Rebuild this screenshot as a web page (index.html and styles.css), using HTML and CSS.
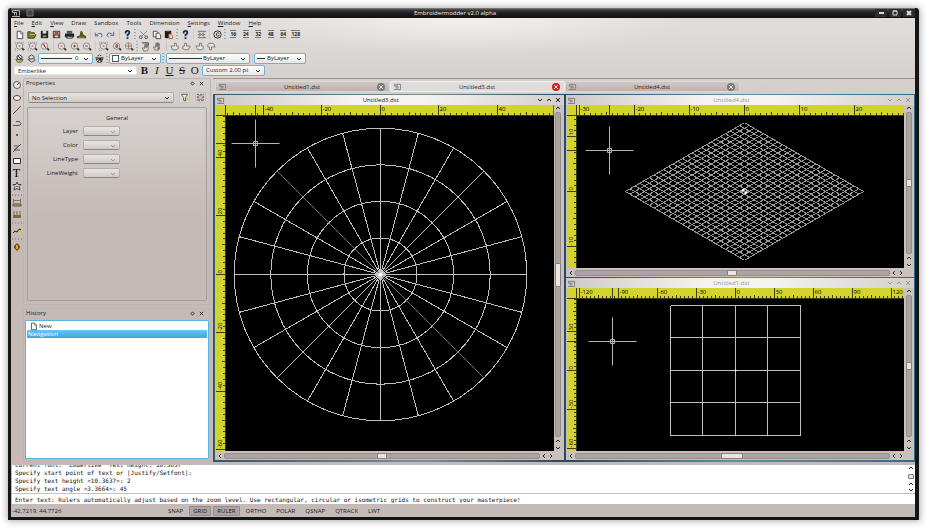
FILE: index.html
```html
<!DOCTYPE html>
<html lang="en">
<head>
<meta charset="utf-8">
<title>Embroidermodder v2.0 alpha</title>
<link rel="stylesheet" href="styles.css">
</head>
<body>
<svg class="sprite" aria-hidden="true">
  <symbol id="machine" viewBox="0 0 10 8"><path d="M1 7.500h8M1.500 1.500h7v5M1.500 1.500v2h4v3M3.500 3.500v3" fill="none" stroke="currentColor"/></symbol>
  <symbol id="down" viewBox="0 0 6 6"><path d="M1 2l2 2 2-2" fill="none" stroke="currentColor"/></symbol>
  <symbol id="up" viewBox="0 0 6 6"><path d="M1 4l2-2 2 2" fill="none" stroke="currentColor"/></symbol>
  <symbol id="left" viewBox="0 0 6 6"><path d="M4 1L2 3l2 2" fill="none" stroke="currentColor"/></symbol>
  <symbol id="right" viewBox="0 0 6 6"><path d="M2 1l2 2-2 2" fill="none" stroke="currentColor"/></symbol>
  <symbol id="x" viewBox="0 0 6 6"><path d="M1 1l4 4M5 1L1 5" fill="none" stroke="currentColor"/></symbol>
  <symbol id="float" viewBox="0 0 6 6"><path d="M3 1l2 2-2 2-2-2z" fill="none" stroke="currentColor"/></symbol>
  <symbol id="new" viewBox="0 0 12 12"><path d="M3.500 2.500h4l2 2v6h-6z" fill="#fff" stroke="#444"/><path d="M7 3v2h2" fill="none" stroke="#777"/></symbol>
  <symbol id="open" viewBox="0 0 12 12"><path d="M2 10V3h3l1 1h3v2h2l-2 4z" fill="#76762c" stroke="#45451a"/><path d="M4 6h6" stroke="#c0c070"/></symbol>
  <symbol id="save" viewBox="0 0 12 12"><path d="M2 2h8v8H2z" fill="#222"/><path d="M4 2h4v3H4z" fill="#ddd"/><path d="M4 7h4v2H4z" fill="#999944"/></symbol>
  <symbol id="saveas" viewBox="0 0 12 12"><path d="M2 2h8v8H2z" fill="#444"/><path d="M3 3h6v3H3z" fill="#c98"/><path d="M4 3l4 3M8 3L4 6" stroke="#a22"/><path d="M4 7h4v2H4z" fill="#ccc"/></symbol>
  <symbol id="print" viewBox="0 0 12 12"><path d="M3 2h6v3H3z" fill="#555"/><path d="M1 5h10v4H1z" fill="#222"/><path d="M3 8h6v2H3z" fill="#ddd" stroke="#333"/></symbol>
  <symbol id="stitch" viewBox="0 0 12 12"><path d="M1 10V8l3-1 1-5 2 1 1 3 3 2v2z" fill="#55551d"/><path d="M3 9h6" stroke="#8e8e40"/></symbol>
  <symbol id="undo" viewBox="0 0 12 12"><path d="M9 9l1-2q0-3-4-2L3 7M2.500 4v3.500H6" fill="none" stroke="#4c5a80"/></symbol>
  <symbol id="redo" viewBox="0 0 12 12"><path d="M4 9Q1 7 3 5t5 1M9.500 3v4H6" fill="none" stroke="#4c5a80"/></symbol>
  <symbol id="help" viewBox="0 0 12 12"><path d="M4 5V4q0-2 2-2t2 2q0 1-2 2.500V8M6 9v2" fill="none" stroke="#16305e" stroke-width="2"/></symbol>
  <symbol id="cut" viewBox="0 0 12 12"><path d="M2 2l6 6M10 2L4 8" fill="none" stroke="#888"/><circle cx="3" cy="9" r="1.500" fill="none" stroke="#456"/><circle cx="9" cy="9" r="1.500" fill="none" stroke="#456"/></symbol>
  <symbol id="copy" viewBox="0 0 12 12"><path d="M2.500 2.500h4l1 1v5h-5z" fill="#fff" stroke="#444"/><path d="M5.500 4.500h3l2 2v4h-5z" fill="#eee" stroke="#444"/></symbol>
  <symbol id="paste" viewBox="0 0 12 12"><path d="M2 2h7v8H2z" fill="#241b18"/><path d="M4 2h3" stroke="#aaa"/><path d="M6.500 5.500h2l2 2v3h-4z" fill="#e8d7c9" stroke="#b3623a"/></symbol>
  <symbol id="pattern" viewBox="0 0 12 12"><path d="M2 2.500h9M2 9.500h9M3 4l6 4M9 4L3 8M2 6h2M8 6h2" fill="none" stroke="#666"/></symbol>
  <symbol id="about" viewBox="0 0 12 12"><circle cx="6" cy="6" r="4" fill="none" stroke="#222"/><path d="M8 5Q6 3 5 5v2q1 2 3 0" fill="none" stroke="#222"/></symbol>
  <symbol id="lens" viewBox="0 0 12 12"><circle cx="6" cy="5.500" r="3.500" fill="#e6e1df" stroke="#8a8381"/><path d="M9 8l2 2" stroke="#333" stroke-width="2"/></symbol>
  <symbol id="z-dot" viewBox="0 0 12 12"><use href="#lens"/><path d="M5 5h2v1H5z" fill="#b22"/></symbol>
  <symbol id="z-plus" viewBox="0 0 12 12"><use href="#lens"/><path d="M4.500 5.500h3M6 4v3" stroke="#a22"/></symbol>
  <symbol id="z-minus" viewBox="0 0 12 12"><use href="#lens"/><path d="M4.500 5.500h3" stroke="#a22"/></symbol>
  <symbol id="z-win" viewBox="0 0 12 12"><path d="M1.500 4V1.500H4M8 1.500h2.500V4M1.500 8v2.500H4" fill="none" stroke="#888" stroke-dasharray="1 1"/><use href="#lens"/><path d="M5 5h2v1H5z" fill="#b22"/></symbol>
  <symbol id="z-prev" viewBox="0 0 12 12"><use href="#lens"/><path d="M4 3l4 5M6 4v2" stroke="#a22"/></symbol>
  <symbol id="z-all" viewBox="0 0 12 12"><use href="#lens"/><path d="M5.500 4v3H7V4z" fill="none" stroke="#a22"/></symbol>
  <symbol id="z-ext" viewBox="0 0 12 12"><use href="#lens"/><path d="M3 5.500h6M6 2.500v6" stroke="#a66"/></symbol>
  <symbol id="hand" viewBox="0 0 12 12"><path d="M3 10L1.500 6.500h1L4 7V3h1v3-4h1v4-4h1v4-3h1v5l-1 2z" fill="#ddd8d5" stroke="#777"/></symbol>
  <symbol id="pan" viewBox="0 0 12 12"><path d="M2 2h7v3" fill="none" stroke="#333"/><use href="#hand" x="1" y="1"/></symbol>
  <symbol id="panpt" viewBox="0 0 12 12"><use href="#hand"/><path d="M6 7h2v2H6z" fill="#a33"/></symbol>
  <symbol id="point" viewBox="0 0 12 12"><path d="M2 5.500h4v-3h2v3h2v3l-2 1H4z" fill="#e8e3e1" stroke="#777"/></symbol>
  <symbol id="bulb" viewBox="0 0 12 12"><path d="M3 4l3-2 3 2-1 3H4z" fill="#ddd" stroke="#333"/><path d="M2 7h8l-2 3H4z" fill="#c5c52f" stroke="#555"/><path d="M4 3l4 4" stroke="#222"/></symbol>
  <symbol id="layer" viewBox="0 0 12 12"><path d="M3 4l3-2 3 2-1 3H4z" fill="#ddd" stroke="#444"/><path d="M2 7l7-1 1 2-4 2z" fill="#ccc" stroke="#555"/></symbol>
  <symbol id="wheel" viewBox="0 0 12 12"><path d="M2 5l4-3 4 3-2 5H4z" fill="#777" stroke="#333"/><path d="M2 4h8M6 2v8M3 9l6-6" stroke="#ddd"/><path d="M5 5h3v3H5z" fill="#222"/></symbol>
  <symbol id="circle" viewBox="0 0 12 12"><circle cx="6" cy="6" r="3.500" fill="#eee" stroke="#555"/><path d="M6 6l2-2" stroke="#b22"/></symbol>
  <symbol id="ellipse" viewBox="0 0 12 12"><ellipse cx="6" cy="6" rx="3.500" ry="2.500" fill="#eee" stroke="#555"/><path d="M2 6h1M9 6h1M6 3v1M6 8v1" stroke="#c11"/></symbol>
  <symbol id="line" viewBox="0 0 12 12"><path d="M2 10l8-8" stroke="#444"/><path d="M2 9h1v1H2zM9 2h1v1H9z" fill="#b33"/></symbol>
  <symbol id="arc" viewBox="0 0 12 12"><path d="M2 8.500h5q3 0 3-2L8 4.500H5" fill="none" stroke="#555"/><path d="M3 8h1v1H3zM8 4h1v1H8z" fill="#b33"/></symbol>
  <symbol id="dot" viewBox="0 0 12 12"><path d="M5 5h2v2H5z" fill="#b43b3b"/></symbol>
  <symbol id="poly" viewBox="0 0 12 12"><path d="M3 4h5L3 8h6M2 10l8-8" fill="none" stroke="#555"/><path d="M3 8h1v1H3z" fill="#b33"/></symbol>
  <symbol id="rect" viewBox="0 0 12 12"><path d="M2.500 3.500h7v5h-7z" fill="#fff" stroke="#333"/><path d="M2 3h1v1H2zM9 8h1v1H9z" fill="#b33"/></symbol>
  <symbol id="star" viewBox="0 0 12 12"><path d="M6 2l1 2.500h3L8 6.500l1 3.500-3-1.500L3 10l1-3.500-2-2h3z" fill="#ddd" stroke="#444"/><path d="M5 6h2v1H5z" fill="#b33"/></symbol>
  <symbol id="dim" viewBox="0 0 12 12"><path d="M2 3.500h8M2.500 2v4M9.500 2v4" fill="none" stroke="#777"/><path d="M2 7h8v2H2z" fill="#b5b52f" stroke="#555"/></symbol>
  <symbol id="dim2" viewBox="0 0 12 12"><path d="M2 3h8M2 5h8" stroke="#a55" stroke-dasharray="2 1"/><path d="M2 6h8v3H2z" fill="#75752d"/></symbol>
  <symbol id="path" viewBox="0 0 12 12"><path d="M2 8l2-2 2 1 2-3 2 1" fill="none" stroke="#222"/><path d="M8 7h2v3H8z" fill="#d8d830"/></symbol>
  <symbol id="bead" viewBox="0 0 12 12"><path d="M6 2l3 3v2L6 10 3 7V5z" fill="#7c4a12"/><path d="M5 4h2v4H5z" fill="#e3a52c"/></symbol>
  <symbol id="filter" viewBox="0 0 12 12"><path d="M2.500 2.500h7L7 6v4L5 9V6z" fill="#eee" stroke="#555"/><path d="M8 6h2v3H8z" fill="#c5c52d"/></symbol>
  <symbol id="select" viewBox="0 0 12 12"><path d="M2.500 2.500h7v7h-7z" fill="none" stroke="#555" stroke-dasharray="2 1"/><path d="M4 4h4v4H4z" fill="#ccc" stroke="#a77"/></symbol>
</svg>

<div class="window">
  <header class="titlebar">
    <span class="title-left"><svg><use href="#machine"/></svg><svg viewBox="0 0 10 8"><path d="M2 1h6v6H2z" fill="#444" stroke="#777"/></svg></span>
    <span>Embroidermodder v2.0 alpha</span>
    <span class="title-right">
      <button aria-label="Minimize"><svg viewBox="0 0 8 8"><path d="M2 3h5v2H2z" fill="#ddd"/></svg></button>
      <button aria-label="Maximize"><svg viewBox="0 0 8 8"><path d="M2 2h4v4H2zM2 2h4" fill="none" stroke="#ddd"/></svg></button>
      <button aria-label="Close"><svg viewBox="0 0 8 8"><path d="M2 2l4 4M6 2L2 6" stroke="#ddd" stroke-width="2"/></svg></button>
    </span>
  </header>

  <nav class="menu">
    <button><u>F</u>ile</button><button><u>E</u>dit</button><button><u>V</u>iew</button><button>Draw</button><button>Sandbox</button><button>Tools</button><button>Dimension</button><button><u>S</u>ettings</button><button><u>W</u>indow</button><button><u>H</u>elp</button>
  </nav>

  <div class="toolbar">
    <div class="group g6"><button aria-label="New"><svg><use href="#new"/></svg></button><button aria-label="Open"><svg><use href="#open"/></svg></button><button aria-label="Save"><svg><use href="#save"/></svg></button><button aria-label="Save as"><svg><use href="#saveas"/></svg></button><button aria-label="Print"><svg><use href="#print"/></svg></button><button aria-label="Export"><svg><use href="#stitch"/></svg></button></div>
    <i class="sep"></i>
    <div class="group g2"><button aria-label="Undo"><svg><use href="#undo"/></svg></button><button aria-label="Redo"><svg><use href="#redo"/></svg></button></div>
    <i class="sep"></i>
    <div class="group"><button aria-label="Help"><svg><use href="#help"/></svg></button></div>
    <i class="grip"></i>
    <div class="group g3"><button aria-label="Cut"><svg><use href="#cut"/></svg></button><button aria-label="Copy"><svg><use href="#copy"/></svg></button><button aria-label="Paste"><svg><use href="#paste"/></svg></button></div>
    <i class="grip"></i>
    <div class="group"><button aria-label="What's this"><svg><use href="#help"/></svg></button></div>
    <i class="sep"></i>
    <div class="group"><button aria-label="Details"><svg><use href="#pattern"/></svg></button></div>
    <i class="sep"></i>
    <div class="group"><button aria-label="About"><svg><use href="#about"/></svg></button></div>
    <i class="grip"></i>
    <div class="group g6 sizes"><button><span>16</span></button><button><span>24</span></button><button><span>32</span></button><button><span>48</span></button><button><span>64</span></button><button><span>128</span></button></div>
  </div>

  <div class="toolbar">
    <div class="group g3"><button aria-label="Zoom realtime"><svg><use href="#z-win"/></svg></button><button aria-label="Zoom window"><svg><use href="#z-win"/></svg></button><button aria-label="Zoom previous"><svg><use href="#z-prev"/></svg></button></div>
    <i class="sep"></i>
    <div class="group g3"><button aria-label="Zoom dynamic"><svg><use href="#z-dot"/></svg></button><button aria-label="Zoom in"><svg><use href="#z-plus"/></svg></button><button aria-label="Zoom out"><svg><use href="#z-minus"/></svg></button></div>
    <i class="sep"></i>
    <div class="group g3"><button aria-label="Zoom selected"><svg><use href="#z-win"/></svg></button><button aria-label="Zoom all"><svg><use href="#z-all"/></svg></button><button aria-label="Zoom extents"><svg><use href="#z-ext"/></svg></button></div>
    <i class="grip"></i>
    <div class="group g2"><button aria-label="Pan realtime"><svg><use href="#pan"/></svg></button><button aria-label="Pan point"><svg><use href="#panpt"/></svg></button></div>
    <i class="sep"></i>
    <div class="group g4"><button aria-label="Pan left"><svg><use href="#point"/></svg></button><button aria-label="Pan right"><svg class="flip"><use href="#point"/></svg></button><button aria-label="Pan up"><svg><use href="#point"/></svg></button><button aria-label="Pan down"><svg class="turn"><use href="#point"/></svg></button></div>
  </div>

  <div class="toolbar">
    <div class="group g2"><button aria-label="Make layer current"><svg><use href="#bulb"/></svg></button><button aria-label="Layers"><svg><use href="#layer"/></svg></button></div>
    <span class="combo blue c-layer"><i class="stroke"></i><select aria-label="Layer"><option>0</option></select><svg><use href="#down"/></svg></span>
    <div class="group"><button aria-label="Layer previous"><svg><use href="#wheel"/></svg></button></div>
    <i class="grip"></i>
    <span class="combo blue c-color"><i class="swatch"></i><select aria-label="Color"><option>ByLayer</option></select><svg><use href="#down"/></svg></span>
    <i class="grip"></i>
    <span class="combo blue c-type"><i class="stroke"></i><select aria-label="Line type"><option>ByLayer</option></select><svg><use href="#down"/></svg></span>
    <i class="sep"></i>
    <span class="combo blue c-weight"><i class="stroke"></i><select aria-label="Line weight"><option>ByLayer</option></select><svg><use href="#down"/></svg></span>
  </div>

  <div class="toolbar">
    <span class="combo c-font"><select aria-label="Font"><option>Emberlike</option></select><svg><use href="#down"/></svg></span>
    <div class="group g5 styles"><button><b>B</b></button><button><em>I</em></button><button><u>U</u></button><button><s>S</s></button><button><span class="over">O</span></button></div>
    <span class="combo blue c-size"><select aria-label="Text size"><option>Custom 2.00 pt</option></select><svg><use href="#down"/></svg></span>
  </div>

  <main class="work">
    <div class="tools">
      <div class="stack"><button aria-label="Circle"><svg><use href="#circle"/></svg></button><button aria-label="Ellipse"><svg><use href="#ellipse"/></svg></button><button aria-label="Line"><svg><use href="#line"/></svg></button><button aria-label="Arc"><svg><use href="#arc"/></svg></button><button aria-label="Point"><svg><use href="#dot"/></svg></button><button aria-label="Polyline"><svg><use href="#poly"/></svg></button><button aria-label="Rectangle"><svg><use href="#rect"/></svg></button><button class="text-tool">T</button><button aria-label="Star"><svg><use href="#star"/></svg></button></div>
      <i class="hgrip"></i>
      <button aria-label="Distance"><svg><use href="#dim"/></svg></button><button aria-label="Locate point"><svg><use href="#dim2"/></svg></button>
      <i class="hgrip"></i>
      <button aria-label="Path"><svg><use href="#path"/></svg></button>
      <i class="hgrip"></i>
      <button aria-label="Sandbox"><svg><use href="#bead"/></svg></button>
    </div>

    <aside class="docks">
      <section class="dock props">
        <h2>Properties <span><button aria-label="Float"><svg><use href="#float"/></svg></button><button aria-label="Close"><svg><use href="#x"/></svg></button></span></h2>
        <div class="pick">
          <span class="combo grey"><select aria-label="Selection"><option>No Selection</option></select><svg><use href="#down"/></svg></span>
          <button aria-label="Quick select"><svg><use href="#filter"/></svg></button><button aria-label="Select objects"><svg><use href="#select"/></svg></button>
        </div>
        <div class="sheet">
          <fieldset>
            <legend>General</legend>
            <label for="p-layer">Layer</label><span class="combo grey"><select id="p-layer"></select><svg><use href="#down"/></svg></span>
            <label for="p-color">Color</label><span class="combo grey"><select id="p-color"></select><svg><use href="#down"/></svg></span>
            <label for="p-type">LineType</label><span class="combo grey"><select id="p-type"></select><svg><use href="#down"/></svg></span>
            <label for="p-weight">LineWeight</label><span class="combo grey"><select id="p-weight"></select><svg><use href="#down"/></svg></span>
          </fieldset>
        </div>
      </section>
      <section class="dock hist">
        <h2>History <span><button aria-label="Float"><svg><use href="#float"/></svg></button><button aria-label="Close"><svg><use href="#x"/></svg></button></span></h2>
        <ul>
          <li><svg><use href="#new"/></svg>New</li>
          <li class="on">Navigation</li>
        </ul>
      </section>
    </aside>

    <section class="mdi">
      <div class="tabs">
        <button class="tab"><svg class="mach"><use href="#machine"/></svg><span>Untitled1.dst</span><svg class="close"><use href="#x"/></svg></button>
        <button class="tab on"><svg class="mach"><use href="#machine"/></svg><span>Untitled3.dst</span><svg class="close"><use href="#x"/></svg></button>
        <button class="tab"><svg class="mach"><use href="#machine"/></svg><span>Untitled4.dst</span><svg class="close"><use href="#x"/></svg></button>
      </div>
      <div class="area">
        <article class="sub tall on">
          <header><svg class="mach"><use href="#machine"/></svg><span>Untitled3.dst</span><span class="ctl"><svg><use href="#down"/></svg><svg><use href="#up"/></svg><svg><use href="#x"/></svg></span></header>
          <div class="view"><svg class="canvas" data-view="polar"></svg></div>
          <div class="vbar"><svg><use href="#up"/></svg><div class="track"><i></i></div><svg><use href="#up"/></svg><svg><use href="#down"/></svg></div>
          <div class="hbar"><svg><use href="#left"/></svg><div class="track"><i></i></div><svg><use href="#left"/></svg><svg><use href="#right"/></svg></div>
        </article>
        <article class="sub">
          <header><svg class="mach"><use href="#machine"/></svg><span>Untitled4.dst</span><span class="ctl"><svg><use href="#down"/></svg><svg><use href="#up"/></svg><svg><use href="#x"/></svg></span></header>
          <div class="view"><svg class="canvas" data-view="iso"></svg></div>
          <div class="vbar"><svg><use href="#up"/></svg><div class="track"><i></i></div><svg><use href="#up"/></svg><svg><use href="#down"/></svg></div>
          <div class="hbar"><svg><use href="#left"/></svg><div class="track"><i></i></div><svg><use href="#left"/></svg><svg><use href="#right"/></svg></div>
        </article>
        <article class="sub">
          <header><svg class="mach"><use href="#machine"/></svg><span>Untitled1.dst</span><span class="ctl"><svg><use href="#down"/></svg><svg><use href="#up"/></svg><svg><use href="#x"/></svg></span></header>
          <div class="view"><svg class="canvas" data-view="rect"></svg></div>
          <div class="vbar"><svg><use href="#up"/></svg><div class="track"><i></i></div><svg><use href="#up"/></svg><svg><use href="#down"/></svg></div>
          <div class="hbar"><svg><use href="#left"/></svg><div class="track wide"><i></i></div><svg><use href="#left"/></svg><svg><use href="#right"/></svg></div>
        </article>
      </div>
    </section>
  </main>

  <section class="command">
    <div class="log">
      <pre>Current font: "Emberlike" Text height: 10.3637
Specify start point of text or [Justify/Setfont]:
Specify text height &lt;10.3637&gt;: 2
Specify text angle &lt;3.3664&gt;: 45</pre>
      <div class="vbar"><svg><use href="#up"/></svg><div class="track"><i></i></div><svg><use href="#up"/></svg><svg><use href="#down"/></svg></div>
    </div>
    <input aria-label="Command" value="Enter text: Rulers automatically adjust based on the zoom level. Use rectangular, circular or isometric grids to construct your masterpiece!">
  </section>

  <footer class="status">
    <output>-42.7219, 44.7726</output>
    <button>SNAP</button><button class="on">GRID</button><button class="on">RULER</button><button>ORTHO</button><button>POLAR</button><button>QSNAP</button><button>QTRACK</button><button>LWT</button>
  </footer>
</div>
<script src="views.js"></script>
</body>
</html>
```
FILE: views.js
```js
// Rulers, grids and cursor for each drawing view. Origins and cursors are in view pixels.
const views = {
  polar: { ox: 164, oy: 169, scale: 2.925, major: 20, minor: 2, mid: 10, cx: 39, cy: 38 },
  iso: { ox: 177, oy: 86, scale: 5.5, major: 10, minor: 1, mid: 5, cx: 42, cy: 45 },
  rect: { ox: 168, oy: 82, scale: 1.3, major: 30, minor: 3, mid: 15, cx: 45, cy: 53 }
};
const NS = 'http://www.w3.org/2000/svg';
const RX = 10, RY = 11;

function add(svg, name, attrs, text) {
  const el = document.createElementNS(NS, name);
  for (const k in attrs) el.setAttribute(k, attrs[k]);
  if (text !== undefined) el.textContent = text;
  svg.appendChild(el);
}
const snap = n => Math.floor(n) + 0.5;

function grid(svg, kind, v) {
  const x0 = snap(v.ox), y0 = snap(v.oy), s = v.scale;
  let d = '';
  if (kind === 'polar') {
    for (let i = 1; i < 5; i++) add(svg, 'circle', { cx: x0, cy: y0, r: i * 12.5 * s, class: 'grid' });
    for (let a = 0; a < 360; a += 15) {
      const t = a * Math.PI / 180, r = 50 * s;
      add(svg, 'path', { d: `M${x0} ${y0}L${x0 + r * Math.cos(t)} ${y0 + r * Math.sin(t)}`, class: a === 45 || a === 225 ? 'grid dim' : 'grid' });
    }
    add(svg, 'circle', { cx: x0, cy: y0, r: 2, class: 'hub' });
  } else if (kind === 'iso') {
    const w = 25 * s * Math.cos(Math.PI / 6), h = 12.5 * s;
    for (let i = 0; i <= 25; i++) {
      const k = i / 25;
      d += `M${x0 - w + w * k} ${y0 - h * k}L${x0 + w * k} ${y0 + h - h * k}`;
      d += `M${x0 - w + w * k} ${y0 + h * k}L${x0 + w * k} ${y0 - h + h * k}`;
    }
    add(svg, 'path', { d, class: 'grid fine' });
    add(svg, 'circle', { cx: x0, cy: y0, r: 3, class: 'hub' });
    add(svg, 'path', { d: `M${x0} ${y0}v-2h2v2zM${x0} ${y0}v2h-2v-2z`, class: 'hub-dark' });
  } else {
    const r = 50 * s;
    for (let i = -2; i <= 2; i++) {
      const px = snap(v.ox + i * 25 * s), py = snap(v.oy + i * 25 * s);
      d += `M${px} ${y0 - r}V${y0 + r}M${x0 - r} ${py}H${x0 + r}`;
    }
    add(svg, 'path', { d, class: 'grid' });
    add(svg, 'circle', { cx: x0, cy: y0, r: 1, class: 'hub' });
  }
}

function rulers(svg, v, w, h) {
  add(svg, 'path', { d: `M0 0H${w}V${RY}H${RX}V${h}H0z`, class: 'ruler' });
  let d = `M${RX} ${RY - 0.5}H${w}M${RX - 0.5} 0V${h}M0 ${RY - 0.5}H${RX}`;
  const size = (u, full) => u % v.major === 0 ? full : u % v.mid === 0 ? 4 : 3;
  const from = -Math.floor((v.ox - RX) / v.scale / v.minor) * v.minor;
  for (let u = from; v.ox + u * v.scale < w; u += v.minor) {
    const x = snap(v.ox + u * v.scale);
    d += `M${x} ${RY}v${-size(u, RY)}`;
    if (u % v.major === 0) add(svg, 'text', { x: x + 1, y: 6, class: 'num' }, u);
  }
  const top = Math.floor((v.oy - RY) / v.scale / v.minor) * v.minor;
  for (let u = top; v.oy - u * v.scale < h; u -= v.minor) {
    const y = snap(v.oy - u * v.scale);
    d += `M${RX} ${y}h${-size(u, RX)}`;
    if (u % v.major === 0) add(svg, 'text', { transform: `translate(6 ${y - 1}) rotate(-90)`, class: 'num' }, u);
  }
  d += `M${v.cx + 0.5} 0V${RY}M0 ${v.cy + 0.5}H${RX}`;
  add(svg, 'path', { d, class: 'tick' });
}

function draw(svg) {
  const kind = svg.dataset.view, v = views[kind];
  const { width, height } = svg.getBoundingClientRect();
  svg.replaceChildren();
  grid(svg, kind, v);
  const x = v.cx + 0.5, y = v.cy + 0.5;
  add(svg, 'path', { d: `M${x - 24} ${y}h48M${x} ${y - 24}v48M${x - 2} ${y - 2}h4v4h-4z`, class: 'cursor' });
  rulers(svg, v, width, height);
}
const drawAll = () => document.querySelectorAll('.canvas').forEach(draw);
drawAll();
addEventListener('resize', drawAll);
```
FILE: styles.css
```css
* { box-sizing: border-box; }
body {
  margin: 0;
  height: 100vh;
  padding: 8px;
  display: flex;
  background: #fff;
  color: #1c1a19;
  font: 6px/8px "Open Sans", "Noto Sans", sans-serif;
}
.sprite { position: absolute; width: 0; height: 0; }
button, select, input { font: inherit; color: inherit; margin: 0; padding: 0; border: 0; background: none; border-radius: 0; }
button { display: flex; align-items: center; justify-content: center; }
svg { display: block; }
.mach { width: 9px; height: 7px; color: #777; }

.window {
  flex: 1;
  min-width: 0;
  display: flex;
  flex-direction: column;
  border: solid #151515;
  border-width: 0 4px 3px 3px;
  border-radius: 3px 3px 0 0;
  background:
    radial-gradient(ellipse 220px 36px at 50% 10px, #f2f1f0, transparent),
    linear-gradient(#e0dedc 10px, #d6d1ce 70px, #c4bbb8 210px);
  box-shadow: 0 0 7px 1px #aaa;
}
.titlebar {
  height: 10px;
  display: grid;
  grid-template-columns: auto 1fr auto;
  align-items: center;
  text-align: center;
  background: linear-gradient(#888, #3a3a3a 2px, #202020 5px, #111);
  color: #eee;
}
.title-left { display: flex; gap: 4px; color: #aaa; }
.title-left svg { width: 10px; height: 8px; }
.title-right { display: flex; justify-content: flex-end; gap: 2px; }
.title-right button { width: 12px; height: 8px; background: #2d2d2d; }
.title-right svg { width: 8px; height: 8px; }

.menu { display: flex; gap: 8px; padding: 0 3px; height: 10px; align-items: center; }

.toolbar { display: flex; align-items: center; height: 12px; padding-left: 2px; }
.group { display: flex; width: 12px; flex: none; }
.group button { flex: 1; min-width: 0; height: 12px; }
.group svg { width: 11px; height: 11px; flex: none; }
.g2 { width: 25px; }
.g3 { width: 38px; }
.g4 { width: 50px; }
.g5 { width: 63px; }
.g6 { width: 75px; }
.sep { width: 1px; height: 10px; margin: 0 1px 0 2px; background: #cdc8c5; flex: none; }
.grip { width: 2px; height: 10px; margin: 0 1px; flex: none; background: repeating-linear-gradient(#aaa4a1 0 1px, transparent 1px 3px); }
.hgrip { width: 10px; height: 2px; margin: 1px 0; background: repeating-linear-gradient(90deg, #999 0 1px, transparent 1px 3px); }
.sizes span { border: solid #777; border-width: 1px 0; line-height: 6px; font-size: 5px; font-weight: bold; }
.flip { transform: scaleX(-1); }
.turn { transform: rotate(180deg); }
.styles { font: 11px/12px "Liberation Serif", serif; margin: 0 1px; }
.over { text-decoration: overline; }

.combo { position: relative; display: flex; height: 11px; flex: none; border: 1px solid #bdb7b4; border-radius: 2px; background: #fff; }
.combo select { appearance: none; flex: 1; min-width: 0; padding-left: 3px; outline: 0; }
.combo svg { position: absolute; right: 3px; top: 2px; width: 6px; height: 6px; pointer-events: none; color: #222; }
.combo.blue { border-color: #69b4d8; background: linear-gradient(#fff, #e9e6e4); }
.combo.grey { background: linear-gradient(#e8e5e3, #d0cac7); border-color: #b5adaa; border-bottom-color: #8d8683; }
.stroke { position: absolute; left: 2px; top: 4px; height: 1px; background: #333; }
.swatch { position: absolute; left: 2px; top: 1px; width: 7px; height: 7px; background: #fff; border: 1px solid #555; }
.c-layer { width: 55px; }
.c-layer .stroke { width: 31px; }
.c-layer select { padding-left: 36px; }
.c-color { width: 52px; }
.c-color select { padding-left: 11px; }
.c-type { width: 84px; margin-left: 1px; }
.c-type .stroke { width: 33px; }
.c-type select { padding-left: 36px; }
.c-weight { width: 52px; }
.c-weight .stroke { width: 8px; }
.c-weight select { padding-left: 12px; }
.c-font { width: 123px; margin-left: 1px; height: 9px; border-color: #e8e6e4; }
.c-font svg { top: 1px; }
.c-size { width: 63px; }

.work { flex: 1; min-height: 0; display: flex; margin-top: 2px; }
.tools { width: 11px; display: flex; flex-direction: column; align-items: center; padding-top: 1px; }
.stack { display: grid; height: 113px; grid-auto-rows: 1fr; align-items: center; margin-bottom: 1px; }
.tools button { width: 11px; height: 12px; flex: none; }
.tools svg { width: 12px; height: 12px; flex: none; }
.tools .text-tool { font: 12px/12px "Liberation Serif", serif; color: #000; }

.docks { width: 188px; margin: 0 1px; display: flex; flex-direction: column; gap: 3px; }
.dock { display: flex; flex-direction: column; border: 1px solid #bdb5b2; border-radius: 2px; padding: 0 1px 2px; }
.dock h2 { margin: 0; padding: 0 5px 0 1px; height: 8px; font: inherit; display: flex; align-items: center; justify-content: space-between; }
.dock h2 span { display: flex; gap: 4px; }
.dock h2 svg { width: 5px; height: 5px; }
.props { flex: 1; }
.pick { display: flex; gap: 5px; align-items: center; padding: 5px 3px 4px; }
.pick .combo { flex: 1; }
.pick button { width: 11px; height: 11px; background: #dedad7; border: 1px solid #c9c3c0; border-radius: 1px; }
.pick button svg { width: 11px; height: 11px; flex: none; }
.sheet { flex: 1; margin: 0 2px 1px; padding: 2px; border: 1px solid #aaa19e; border-radius: 2px; }
fieldset {
  margin: 0;
  border: 0;
  padding: 4px 2px 4px;
  display: grid;
  grid-template-columns: 46px 37px 1fr;
  gap: 4px 5px;
  align-items: center;
  border-radius: 2px;
  background: linear-gradient(#d5d0cd, transparent);
  box-shadow: inset 0 1px #e0dbd9;
}
legend { float: left; grid-column: 1 / -1; width: 100%; padding: 0; text-align: center; }
fieldset label { grid-column: 1; text-align: right; }
fieldset .combo { grid-column: 2; height: 10px; }
fieldset .combo svg { color: #999; }
.hist { height: 154px; }
.hist ul { flex: 1; margin: 3px 0 0; padding: 1px; list-style: none; background: #fff; border: 1px solid #58b4df; border-radius: 1px; }
.hist li { display: flex; align-items: center; height: 8px; padding-left: 1px; }
.hist li svg { width: 11px; height: 10px; }
.hist .on { color: #fff; background: linear-gradient(#6cc3f5, #3ba5e6); }

.mdi { flex: 1; min-width: 0; margin-left: 1px; display: flex; flex-direction: column; border-top: 1px solid #99928f; }
.tabs { display: flex; height: 15px; padding: 2px 0 3px 2px; }
.tab { width: 25%; height: 11px; justify-content: space-between; padding: 0 4px 0 2px; background: linear-gradient(#d0c8c5, #bcb3b0); border: 1px solid #ddd8d6; border-radius: 2px; }
.tab.on { background: #e0dcda; border-color: #eee; }
.close { width: 8px; height: 8px; padding: 1px; color: #eee; background: #777; border-radius: 50%; }
.tab.on .close { background: #c8201c; }
.area {
  flex: 1;
  min-height: 0;
  display: grid;
  grid: 1fr 1fr / 1fr 1fr;
  gap: 1px 2px;
  padding: 1px 1px 2px 2px;
  background: linear-gradient(90deg, #31576e, #7590a0 30%, #274a62 50%, #5f8fa8 75%, #2f6a8a);
}
.sub {
  min-width: 0;
  min-height: 0;
  display: grid;
  grid: 10px 1fr 9px / 1fr 9px;
  padding: 0 1px;
  background: #c9c1be;
}
.tall { grid-row: 1 / 3; }
.sub header { grid-column: 1 / 3; display: grid; grid-template-columns: auto 1fr auto; align-items: center; text-align: center; padding: 0 3px 0 1px; margin: 0 -1px; background: linear-gradient(90deg, #cfcac8, #f4f3f2 40%, #f4f3f2 60%, #d3cecc); color: #999; }
.sub.on header { color: #222; }
.ctl { display: flex; gap: 3px; justify-content: flex-end; }
.ctl svg { width: 6px; height: 6px; }
.view { position: relative; min-height: 0; background: #000; }
.canvas { position: absolute; inset: 0; width: 100%; height: 100%; }
.grid { fill: none; stroke: #c0c0c0; shape-rendering: crispEdges; }
.grid.dim { stroke: #707070; }
.grid.fine { stroke: #999; }
.hub { fill: #fff; }
.hub-dark { fill: #222; }
.cursor { fill: none; stroke: #b8b8b8; }
.ruler { fill: #d3d32f; }
.tick { fill: none; stroke: #3c3c10; }
.num { font-size: 6px; fill: #000; }

.vbar, .hbar { display: flex; align-items: center; gap: 1px; color: #222; }
.vbar { flex-direction: column; }
.vbar svg, .hbar svg { width: 6px; height: 6px; flex: none; }
.hbar { padding: 0 9px 0 1px; grid-column: 1 / 3; }
.track { flex: 1; display: flex; align-items: center; justify-content: center; background: #aca4a1; border: 1px solid #958d8a; border-radius: 2px; }
.vbar .track { width: 6px; }
.hbar .track { height: 6px; }
.track i { background: #e8e5e3; border: 1px solid #86807d; border-radius: 1px; }
.vbar .track i { width: 6px; height: 8px; flex: none; }
.tall .vbar .track i { height: 24px; }
.hbar .track i { width: 10px; height: 6px; flex: none; }
.hbar .wide i { width: 22px; }

.command { margin-top: 3px; height: 39px; display: flex; flex-direction: column; padding-left: 1px; font-family: "DejaVu Sans Mono", monospace; color: #111; }
.log { flex: 1; min-height: 0; display: flex; justify-content: space-between; align-items: flex-end; overflow: hidden; background: #fff; }
.log pre { margin: 0; padding-left: 3px; font: inherit; }
.log .vbar { align-self: stretch; gap: 0; width: 8px; }
.log .vbar .track { border: 0; background: none; }
.log .vbar .track i { height: 5px; }
.command input { width: 100%; height: 11px; padding: 0 3px; background: #fff; border-top: 1px solid #c9c1be; outline: 0; }

.status { height: 13px; display: flex; align-items: center; gap: 2px; }
.status output { width: 151px; padding-left: 1px; }
.status button { height: 10px; padding: 0 3px; border: 1px solid transparent; border-radius: 1px; }
.status .on { background: #aea5a2; border-color: #938b88; }
```
